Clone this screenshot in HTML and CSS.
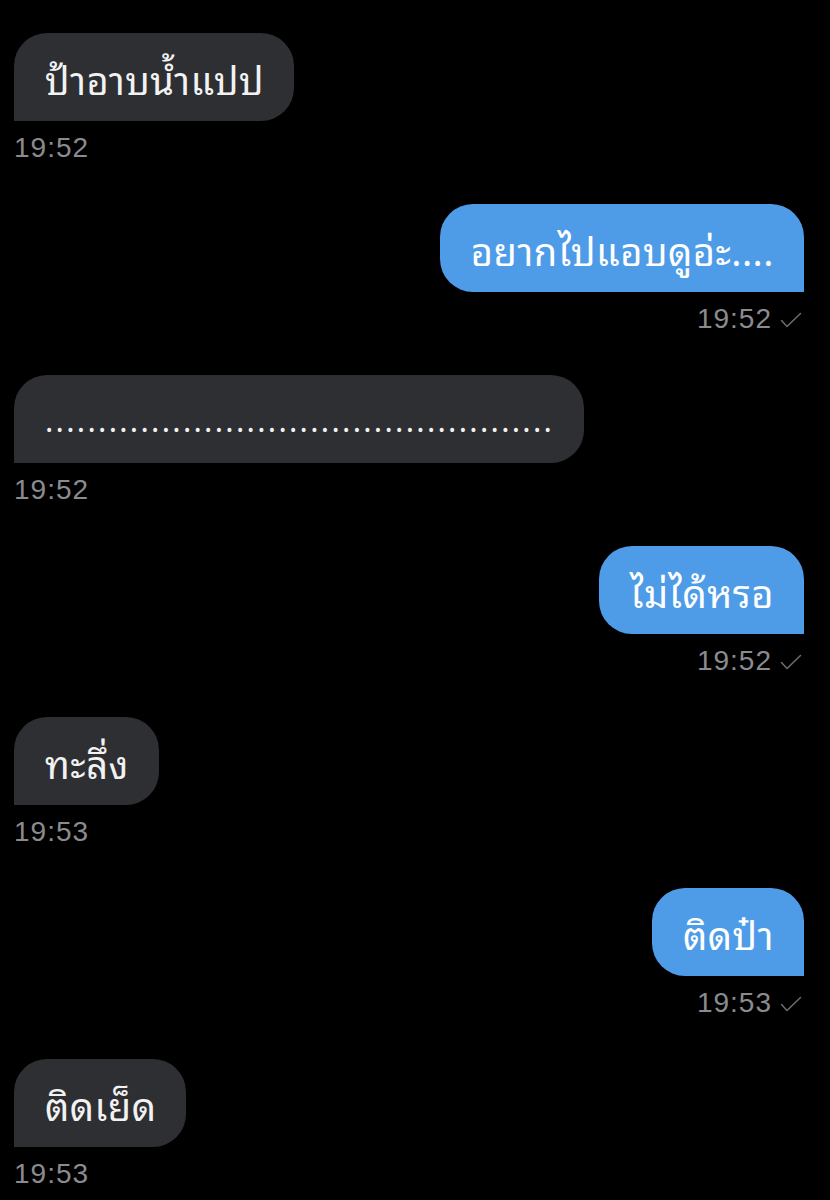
FILE: index.html
```html
<!DOCTYPE html>
<html lang="th">
<head>
<meta charset="utf-8">
<link rel="stylesheet" href="styles.css">
</head>
<body>
<div class="chat">
  <div class="msg in">
    <div class="bubble">ป้าอาบน้ำแปป</div>
    <div class="meta">19:52</div>
  </div>
  <div class="msg out">
    <div class="bubble">อยากไปแอบดูอ่ะ....</div>
    <div class="meta">19:52 <svg class="check" viewBox="0 0 22 16" width="22" height="16"><path d="M1.5 8.5 L7 14.5 L20.5 1.5" fill="none" stroke="currentColor" stroke-width="1.5" stroke-linecap="round" stroke-linejoin="round"/></svg></div>
  </div>
  <div class="msg in">
    <div class="bubble dots">................................................</div>
    <div class="meta">19:52</div>
  </div>
  <div class="msg out">
    <div class="bubble">ไม่ได้หรอ</div>
    <div class="meta">19:52 <svg class="check" viewBox="0 0 22 16" width="22" height="16"><path d="M1.5 8.5 L7 14.5 L20.5 1.5" fill="none" stroke="currentColor" stroke-width="1.5" stroke-linecap="round" stroke-linejoin="round"/></svg></div>
  </div>
  <div class="msg in">
    <div class="bubble">ทะลึ่ง</div>
    <div class="meta">19:53</div>
  </div>
  <div class="msg out">
    <div class="bubble">ติดป๋า</div>
    <div class="meta">19:53 <svg class="check" viewBox="0 0 22 16" width="22" height="16"><path d="M1.5 8.5 L7 14.5 L20.5 1.5" fill="none" stroke="currentColor" stroke-width="1.5" stroke-linecap="round" stroke-linejoin="round"/></svg></div>
  </div>
  <div class="msg in">
    <div class="bubble">ติดเย็ด</div>
    <div class="meta">19:53</div>
  </div>
</div>
</body>
</html>
```
FILE: styles.css
```css
html, body {
  margin: 0;
  padding: 0;
  background: #000;
}
.chat {
  display: flex;
  flex-direction: column;
  gap: 39px;
  padding: 33px 26px 0 14px;
}
.msg {
  display: flex;
  flex-direction: column;
}
.msg.in { align-items: flex-start; }
.msg.out { align-items: flex-end; }
.bubble {
  font-family: "Noto Sans Thai Looped", "Noto Serif Thai", "Loma", "Garuda", "Waree", "Norasi", "Noto Sans Thai", "Noto Sans", sans-serif;
  font-size: 38px;
  letter-spacing: 0.5px;
  line-height: 40px;
  height: 40px;
  padding: 25px 30px 23px 31px;
  color: #f2f2f2;
  white-space: nowrap;
}
.in .bubble {
  background: #2e2f32;
  border-radius: 33px 33px 33px 0;
}
.out .bubble {
  background: #4e9ce8;
  color: #fff;
  border-radius: 33px 33px 0 33px;
}
.bubble.dots {
  font-family: "Noto Sans", sans-serif;
  font-size: 31px;
  letter-spacing: 2.3px;
}
.meta {
  margin-top: 10px;
  height: 34px;
  font-family: "Liberation Sans", Arial, sans-serif;
  font-size: 28px;
  line-height: 34px;
  letter-spacing: 1px;
  color: #8b8b8f;
  display: flex;
  align-items: center;
  gap: 8px;
}
.out .meta {
  padding-right: 2px;
}
.check {
  color: #6d6d71;
  margin-top: 2px;
}
```
